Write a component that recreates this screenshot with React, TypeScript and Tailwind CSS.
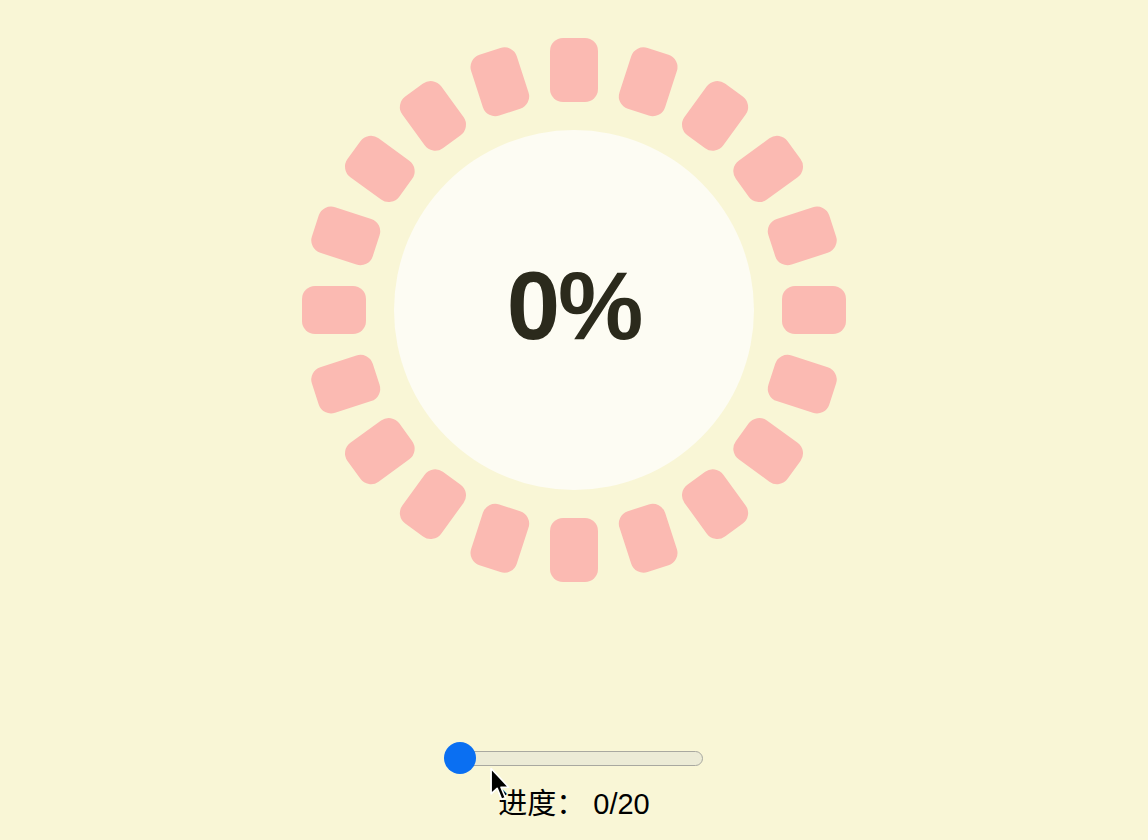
import React from "react";

const SEGMENTS = Array.from({ length: 20 }, (_, i) => i * 18);

export default function App() {
  return (
    <div className="min-h-[840px] w-full bg-[#f9f6d6] flex flex-col items-center pt-[38px] font-['Liberation_Sans','Noto_Sans_CJK_SC',sans-serif]">
      <div className="relative w-[544px] h-[544px] shrink-0">
        {SEGMENTS.map((deg) => (
          <div
            key={deg}
            className="absolute left-[248px] top-[240px] w-[48px] h-[64px] rounded-[13px] bg-[#fbbab2]"
            style={{ transform: `rotate(${deg}deg) translateY(-240px)` }}
          />
        ))}
        <div className="absolute left-[92px] top-[92px] w-[360px] h-[360px] rounded-full bg-[#fdfcf3] flex items-center justify-center">
          <span className="text-[96px] font-bold leading-none text-[#2b2a1c] -mt-[8px] tracking-[-2px]">0%</span>
        </div>
      </div>

      <div className="mt-[160px] relative w-[258px] h-[32px] flex items-center">
        <div className="w-full h-[15px] rounded-full bg-[#ecebd6] border border-[#a8a8a0]" />
        <div className="absolute left-[-1px] top-[0px] w-[32px] h-[32px] rounded-full bg-[#0a6ff2]" />
        <svg
          className="absolute left-[45px] top-[25px]"
          width="22"
          height="36"
          viewBox="0 0 20 32"
        >
          <path
            d="M1 1 L1 24 L6.5 19 L10.5 29 L14 27.5 L10 18 L17 18 Z"
            fill="#000"
            stroke="#fff"
            strokeWidth="1.5"
            strokeLinejoin="round"
          />
        </svg>
      </div>

      <div className="mt-[16px] text-[29px] leading-none text-black">
        进度：&nbsp;0/20
      </div>
    </div>
  );
}
